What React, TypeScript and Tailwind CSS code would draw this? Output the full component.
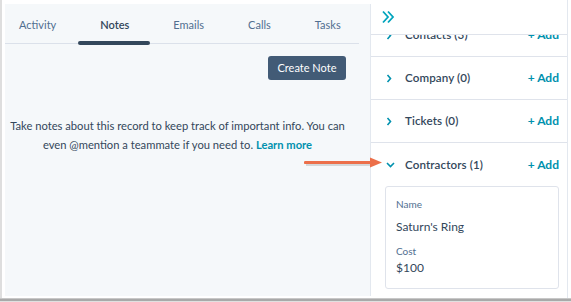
import React from "react";

const font = { fontFamily: "Lato, 'Open Sans', sans-serif" };

function Chevron({ open }: { open?: boolean }) {
  return open ? (
    <svg width="9" height="6" viewBox="0 0 9 6">
      <path d="M1 1 L4.5 4.5 L8 1" fill="none" stroke="#0091ae" strokeWidth="1.6" />
    </svg>
  ) : (
    <svg width="6" height="9" viewBox="0 0 6 9">
      <path d="M1.5 1 L4.5 4.5 L1.5 8" fill="none" stroke="#0091ae" strokeWidth="1.6" />
    </svg>
  );
}

function Row({ label, open, last }: { label: string; open?: boolean; last?: boolean }) {
  return (
    <div
      className={
        "h-[43px] flex items-center pl-[15px] pr-[8px] " + (last ? "" : "border-b border-[#dfe3eb]")
      }
    >
      <span className="w-[19px] flex items-center">
        <Chevron open={open} />
      </span>
      <span className="flex-1 text-[11.6px] font-semibold text-[#33475b] tracking-[0.1px]">{label}</span>
      <span className="text-[12px] font-bold text-[#0091ae]">+ Add</span>
    </div>
  );
}

export default function App() {
  const tabs = ["Activity", "Notes", "Emails", "Calls", "Tasks"];
  return (
    <div className="w-[571px] h-[302px] bg-white relative overflow-hidden" style={font}>
      <div className="flex h-[298px] border-l-2 border-[#dedede]">
        {/* left panel */}
        <div className="w-[369px] pl-[3px] pt-[4px] pb-[2px] flex">
          <div className="flex-1 bg-[#f5f8fa] border-r border-[#e3e8ef] flex flex-col">
            <div className="mr-[11px] border-b border-[#dbe1ea] h-[40px] flex items-center pt-[4px] pl-[14px] gap-[44px]">
              {tabs.map((t) => (
                <div key={t} className="relative h-full flex items-center">
                  <span
                    className={
                      "text-[11px] " +
                      (t === "Notes" ? "text-[#33475b] font-semibold" : "text-[#516f90]")
                    }
                  >
                    {t}
                  </span>
                  {t === "Notes" && (
                    <div className="absolute left-[-22px] right-[-21px] bottom-[-2px] h-[4px] rounded-full bg-[#33475b]" />
                  )}
                </div>
              ))}
            </div>
            <div className="flex justify-end pr-[24px] pt-[12px]">
              <button className="w-[78px] h-[24px] rounded-[3px] bg-[#425b76] text-white text-[11px]">
                Create Note
              </button>
            </div>
            <div className="mt-[36px] text-center text-[11.2px] leading-[19px] text-[#33475b] pr-[20px] whitespace-nowrap">
              Take notes about this record to keep track of important info. You can
              <br />
              even @mention a teammate if you need to.{" "}
              <span className="text-[#0091ae] font-bold">Learn more</span>
            </div>
          </div>
        </div>
        {/* right panel */}
        <div className="w-[197px] border-r border-[#e3e8ef] flex flex-col">
          <div className="h-[35px] border-b border-[#dfe3eb] flex items-center pl-[10px] bg-white relative z-10">
            <svg width="14" height="14" viewBox="0 0 14 14">
              <path d="M2 1.5 L7 7 L2 12.5 M7 1.5 L12 7 L7 12.5" fill="none" stroke="#00a4bd" strokeWidth="1.8" />
            </svg>
          </div>
          <div className="flex-1 overflow-hidden">
            <div className="-mt-[21px]">
              <Row label="Contacts (3)" />
              <Row label="Company (0)" />
              <Row label="Tickets (0)" />
              <Row label="Contractors (1)" open last />
              <div className="ml-[14px] mr-[8px] border border-[#dfe3eb] rounded-[3px] h-[103px] px-[10px] pt-[10px]">
                <div className="text-[10px] text-[#516f90] leading-[14px]">Name</div>
                <div className="text-[12px] text-[#33475b] leading-[16px] mt-[8px]">Saturn's Ring</div>
                <div className="text-[10px] text-[#516f90] leading-[14px] mt-[9px]">Cost</div>
                <div className="text-[12px] text-[#33475b] leading-[16px] mt-[2px]">$100</div>
              </div>
            </div>
          </div>
        </div>
      </div>
      <div className="h-[1px] bg-[#c8c8c8]" />
      <div className="h-[2px] bg-[#a9a9a9]" />
      <div className="h-[1px] bg-[#e0e0e0]" />
      {/* annotation arrow */}
      <div className="absolute left-[304px] top-[156px]">
        <svg width="80" height="14" viewBox="0 0 80 14">
          <path d="M2 8 H68" stroke="#00000022" strokeWidth="4" />
          <path d="M1.5 6.5 H67" stroke="#ec6f4a" strokeWidth="3.2" strokeLinecap="round" />
          <path d="M66 1.5 L78 6.5 L66 11.5 Z" fill="#ec6f4a" />
        </svg>
      </div>
    </div>
  );
}
